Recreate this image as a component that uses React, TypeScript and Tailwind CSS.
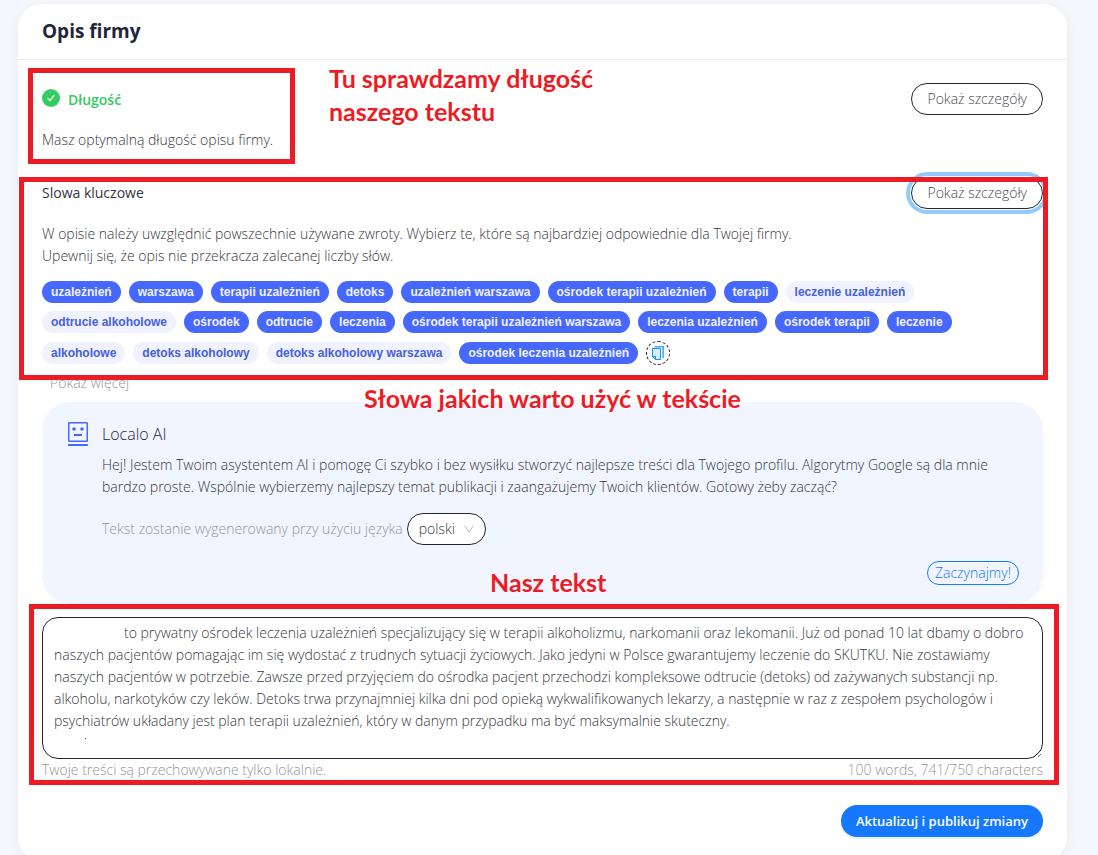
import { useState } from 'react'

const keywords = [
  { text: 'uzależnień', used: true },
  { text: 'warszawa', used: true },
  { text: 'terapii uzależnień', used: true },
  { text: 'detoks', used: true },
  { text: 'uzależnień warszawa', used: true },
  { text: 'ośrodek terapii uzależnień', used: true },
  { text: 'terapii', used: true },
  { text: 'leczenie uzależnień', used: false },
  { text: 'odtrucie alkoholowe', used: false },
  { text: 'ośrodek', used: true },
  { text: 'odtrucie', used: true },
  { text: 'leczenia', used: true },
  { text: 'ośrodek terapii uzależnień warszawa', used: true },
  { text: 'leczenia uzależnień', used: true },
  { text: 'ośrodek terapii', used: true },
  { text: 'leczenie', used: true },
  { text: 'alkoholowe', used: false },
  { text: 'detoks alkoholowy', used: false },
  { text: 'detoks alkoholowy warszawa', used: false },
  { text: 'ośrodek leczenia uzależnień', used: true },
]

const initialText = `to prywatny ośrodek leczenia uzależnień specjalizujący się w terapii alkoholizmu, narkomanii oraz lekomanii. Już od ponad 10 lat dbamy o dobro
naszych pacjentów pomagając im się wydostać z trudnych sytuacji życiowych. Jako jedyni w Polsce gwarantujemy leczenie do SKUTKU. Nie zostawiamy
naszych pacjentów w potrzebie. Zawsze przed przyjęciem do ośrodka pacjent przechodzi kompleksowe odtrucie (detoks) od zażywanych substancji np.
alkoholu, narkotyków czy leków. Detoks trwa przynajmniej kilka dni pod opieką wykwalifikowanych lekarzy, a następnie w raz z zespołem psychologów i
psychiatrów układany jest plan terapii uzależnień, który w danym przypadku ma być maksymalnie skuteczny.`

function CheckIcon() {
  return (
    <svg width="18" height="18" viewBox="0 0 18 18" aria-hidden="true">
      <circle cx="9" cy="9" r="9" fill="#34cb63" />
      <path d="M5.6 9.2l2.4 2.4 4.2-5.4" fill="none" stroke="#fff" strokeWidth="1.3" />
    </svg>
  )
}

function RobotIcon() {
  return (
    <svg width="20" height="24" viewBox="0 0 20 24" aria-hidden="true" fill="#4668ff">
      <rect x="0.75" y="0.75" width="18.5" height="18.5" rx="0.5" fill="none" stroke="#4668ff" strokeWidth="1.5" />
      <circle cx="6" cy="7" r="1.8" />
      <circle cx="14" cy="7" r="1.8" />
      <rect x="6" y="12" width="8" height="2" />
      <rect x="0" y="22" width="20" height="2" rx="0.5" />
    </svg>
  )
}

function CopyIcon() {
  return (
    <svg width="12" height="14" viewBox="0 0 12 14" aria-hidden="true" fill="none" stroke="#1890ff">
      <path d="M2.5 0.7h8.6v11.3" strokeWidth="1.6" stroke="#45a6ff" />
      <path d="M0.5 2.5h8v11h-5l-3-3z" fill="#d6efff" />
      <path d="M0.5 10.5h3v3" />
    </svg>
  )
}

function DetailsButton({ focused = false }: { focused?: boolean }) {
  const ring = focused ? 'outline-4 outline-offset-1 outline-[#91caff]' : ''
  return (
    <button type="button" className={`h-8 shrink-0 rounded-full border border-[#23263b] bg-white px-[15px] text-[#4b4c55] ${ring}`}>
      Pokaż szczegóły
    </button>
  )
}

export default function App() {
  const [text, setText] = useState(initialText)
  const [language, setLanguage] = useState('polski')

  return (
    <div className="bg-[#f6f7fc] pt-1 pr-[31px] pb-6 pl-[18px] font-['Open_Sans',sans-serif] text-sm leading-[22px] font-light text-[#363741]">
      <main className="relative rounded-3xl bg-white shadow-[0_2px_12px_rgba(40,50,90,0.06)]">
        <header className="border-b border-[#ececee] px-6 py-[13px]">
          <h1 className="text-[19px] leading-[29px] font-bold text-[#23263b]">Opis firmy</h1>
        </header>

        <div className="p-6 pt-[23px]">
          <section className="flex items-start justify-between">
            <div className="pt-1.5">
              <h2 className="flex items-start gap-2 font-semibold text-[#34cb63]">
                <CheckIcon />
                Długość
              </h2>
              <p className="mt-[18px]">Masz optymalną długość opisu firmy.</p>
            </div>
            <DetailsButton />
          </section>

          <section className="mt-[26px]">
            <div className="flex items-center justify-between">
              <h2 className="font-normal text-[#33343d]">Slowa kluczowe</h2>
              <DetailsButton focused />
            </div>
            <p className="mt-[14px]">
              W opisie należy uwzględnić powszechnie używane zwroty. Wybierz te, które są najbardziej odpowiednie dla Twojej firmy.
              <br />
              Upewnij się, że opis nie przekracza zalecanej liczby słów.
            </p>
            <ul className="mt-[14px] flex flex-wrap items-center gap-2 pr-4 font-['Liberation_Sans',sans-serif] text-xs leading-[22px] font-bold">
              {keywords.map((keyword) => (
                <li
                  key={keyword.text}
                  className={`rounded-full px-[9px] ${keyword.used ? 'bg-[#4668ff] text-[#f0f2ff]' : 'bg-[#f0f2ff] text-[#4560dc]'}`}
                >
                  {keyword.text}
                </li>
              ))}
              <li>
                <button
                  type="button"
                  aria-label="Kopiuj"
                  className="flex size-6 items-center justify-center rounded-full border border-dashed border-[#23263b]"
                >
                  <CopyIcon />
                </button>
              </li>
            </ul>
            <button type="button" className="mt-[7px] block px-2 text-[#95959b]">
              Pokaż więcej
            </button>
          </section>

          <section className="mt-2 flex gap-[14px] rounded-[28px] bg-[#f0f5ff] pt-5 pr-6 pb-[19px] pl-[26px]">
            <RobotIcon />
            <div className="flex-1">
              <h2 className="text-base leading-6 text-[#23263b]">Localo AI</h2>
              <p className="mt-2">
                Hej! Jestem Twoim asystentem AI i pomogę Ci szybko i bez wysiłku stworzyć najlepsze treści dla Twojego profilu. Algorytmy Google są dla mnie
                bardzo proste. Wspólnie wybierzemy najlepszy temat publikacji i zaangażujemy Twoich klientów. Gotowy żeby zacząć?
              </p>
              <div className="mt-[15px] flex items-center gap-1">
                <label htmlFor="language" className="text-[#9295a3]">
                  Tekst zostanie wygenerowany przy użyciu języka
                </label>
                <div className="relative">
                  <select
                    id="language"
                    value={language}
                    onChange={(e) => setLanguage(e.target.value)}
                    className="block h-8 appearance-none rounded-full border border-[#23263b] bg-white pr-[29px] pl-[11px]"
                  >
                    <option value="polski">polski</option>
                  </select>
                  <svg
                    width="10"
                    height="8"
                    viewBox="0 0 10 8"
                    aria-hidden="true"
                    className="pointer-events-none absolute top-3 right-3"
                  >
                    <path d="M0.5 0.5L5 7l4.5-6.5" fill="none" stroke="#bfbfbf" />
                  </svg>
                </div>
              </div>
              <div className="mt-4 flex justify-end">
                <button type="button" className="flex h-6 items-center rounded-full border border-[#1677ff] px-[7px] text-[#1677ff]">
                  Zaczynajmy!
                </button>
              </div>
            </div>
          </section>

          <section className="mt-[13px]">
            <div className="relative">
              <textarea
                aria-label="Opis firmy"
                rows={6}
                value={text}
                onChange={(e) => setText(e.target.value)}
                className="block w-full resize overflow-hidden rounded-2xl border border-[#23263b] px-[11px] py-1 indent-[70px]"
              />
              <span className="absolute bottom-5 left-[43px] size-px bg-[#4b4c55]" />
            </div>
            <div className="flex justify-between text-[#95959b]">
              <span>Twoje treści są przechowywane tylko lokalnie.</span>
              <span>100 words, 741/750 characters</span>
            </div>
          </section>

          <div className="mt-6 flex justify-end">
            <button
              type="button"
              className="h-8 rounded-full bg-[#1677ff] px-[15px] text-[13px] font-semibold text-white shadow-[0_2px_0_rgba(5,145,255,0.1)]"
            >
              Aktualizuj i publikuj zmiany
            </button>
          </div>
        </div>

        {/* Tutorial frames and captions drawn over the panel */}
        <div className="pointer-events-none font-['Lato',sans-serif] text-[25px] leading-[33px] font-bold text-[#ed1c24]">
          <div className="absolute top-16 left-2.5 h-24 w-[267px] border-5 border-[#ed1c24]" />
          <p className="absolute top-[58px] left-[311px]">
            Tu sprawdzamy długość
            <br />
            naszego tekstu
          </p>
          <div className="absolute top-[173px] right-[19px] left-px h-[203px] border-5 border-[#ed1c24]" />
          <p className="absolute top-[378px] left-[346px]">Słowa jakich warto użyć w tekście</p>
          <p className="absolute top-[562px] left-[472px]">Nasz tekst</p>
          <div className="absolute top-[600px] right-2 left-[11px] h-[181px] border-5 border-[#ed1c24]" />
        </div>
      </main>
    </div>
  )
}
